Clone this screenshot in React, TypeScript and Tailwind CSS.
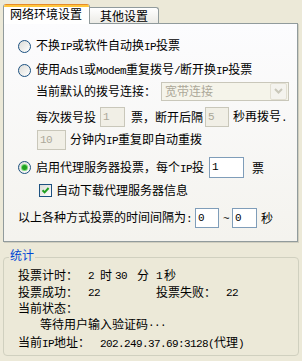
import type { ReactNode } from "react";

// latin runs: narrow mono so each char takes ~6px like the bitmap font
function E({ children }: { children: ReactNode }) {
  return <span className="font-['Liberation_Mono',monospace] text-[11px] tracking-[-0.6px]">{children}</span>;
}

function Radio({ checked }: { checked?: boolean }) {
  return (
    <span className="w-[13px] h-[13px] shrink-0 rounded-full border border-[#1C5180] bg-linear-to-br from-[#DCDCD7] to-white flex items-center justify-center">
      {checked && <span className="w-[5px] h-[5px] rounded-full bg-[#21A121] shadow-[0_0_0_1px_#7BD77B]" />}
    </span>
  );
}

function Checkbox() {
  return (
    <span className="w-[13px] h-[13px] shrink-0 border border-[#1C5180] bg-linear-to-br from-[#DCDCD7] to-white flex items-center justify-center">
      <svg width="9" height="9" viewBox="0 0 9 9">
        <path d="M1.5 4.2 L3.6 6.4 L7.6 2" fill="none" stroke="#21A121" strokeWidth="2" />
      </svg>
    </span>
  );
}

function Field({ value, w, disabled, h = "h-[20px]" }: { value: string; w: string; disabled?: boolean; h?: string }) {
  return (
    <span
      className={`${w} ${h} shrink-0 border flex items-center pl-[2px] ${
        disabled ? "border-[#C9C7BA] bg-[#F1EFE6] text-[#ACA899]" : "border-[#7F9DB9] bg-white text-black"
      }`}
    >
      <E>{value}</E>
    </span>
  );
}

export default function App() {
  return (
    <div className="w-[302px] h-[361px] bg-[#ECE9D8] font-['Noto_Sans_CJK_SC',sans-serif] text-[12px] leading-none text-black flex flex-col">
      {/* tabs */}
      <div className="relative z-10 flex items-end h-[24px] pl-[3px]">
        <div className="w-[87px] h-[20px] bg-white border-x border-[#919B9C] rounded-t-[3px] overflow-hidden flex flex-col">
          <div className="h-[1px] bg-[#E68B2C]" />
          <div className="h-[2px] bg-[#FFC73C]" />
          <div className="pl-[6px] pt-[1px]">网络环境设置</div>
        </div>
        <div className="w-[69px] h-[16px] mb-[1px] border-t border-r border-[#919B9C] rounded-tr-[3px] bg-linear-to-b from-white to-[#ECEBE6] pl-[10px] pt-[2px]">
          其他设置
        </div>
      </div>

      {/* tab page */}
      <div className="-mt-[1px] ml-[3px] w-[295px] h-[219px] border border-[#919B9C] bg-linear-to-b from-[#FCFCFE] to-[#F4F3EE] shadow-[1px_1px_0_#D0CEBF] pl-[14px] pt-[12px] flex flex-col">
        <div className="flex items-center h-[20px]">
          <Radio />
          <span className="ml-[5px]">
            不换<E>IP</E>或软件自动换<E>IP</E>投票
          </span>
        </div>
        <div className="flex items-center h-[20px] mt-[4px]">
          <Radio />
          <span className="ml-[5px]">
            使用<E>Adsl</E>或<E>Modem</E>重复拨号<E>/</E>断开换<E>IP</E>投票
          </span>
        </div>
        <div className="flex items-center h-[20px] mt-[1px] pl-[18px]">
          <span>当前默认的拨号连接：</span>
          <div className="ml-[5px] w-[128px] h-[19px] border border-[#C9C7BA] bg-[#F5F4EA] flex items-center">
            <span className="flex-1 pl-[3px] text-[#ACA899]">宽带连接</span>
            <span className="w-[17px] h-[17px] mr-[1px] border border-[#E2DFD2] bg-[#F4F3EE] rounded-[2px] flex items-center justify-center">
              <svg width="9" height="6" viewBox="0 0 9 6">
                <path d="M1 1 L4.5 4.5 L8 1" fill="none" stroke="#C9C7BA" strokeWidth="2" />
              </svg>
            </span>
          </div>
        </div>
        <div className="flex items-center h-[20px] mt-[6px] pl-[18px]">
          <span>每次拨号投</span>
          <span className="ml-[4px]"><Field value="1" w="w-[25px]" disabled /></span>
          <span className="ml-[6px]">票，断开后隔</span>
          <span className="ml-[2px]"><Field value="5" w="w-[24px]" disabled /></span>
          <span className="ml-[4px]">
            秒再拨号<E>.</E>
          </span>
        </div>
        <div className="flex items-center h-[20px] mt-[3px] pl-[19px]">
          <Field value="10" w="w-[29px]" disabled />
          <span className="ml-[4px]">
            分钟内<E>IP</E>重复即自动重拨
          </span>
        </div>
        <div className="flex items-center h-[21px] mt-[7px]">
          <Radio checked />
          <span className="ml-[5px]">
            启用代理服务器投票，每个<E>IP</E>投
          </span>
          <span className="ml-[5px]"><Field value="1" w="w-[35px]" h="h-[21px]" /></span>
          <span className="ml-[8px]">票</span>
        </div>
        <div className="flex items-center h-[20px] mt-[2px] pl-[21px]">
          <Checkbox />
          <span className="ml-[4px]">自动下载代理服务器信息</span>
        </div>
        <div className="flex items-center h-[20px] mt-[8px]">
          <span>
            以上各种方式投票的时间间隔为<E>:</E>
          </span>
          <span className="ml-[3px]"><Field value="0" w="w-[24px]" /></span>
          <span className="ml-[4px]"><E>~</E></span>
          <span className="ml-[3px]"><Field value="0" w="w-[25px]" /></span>
          <span className="ml-[4px]">秒</span>
        </div>
      </div>

      {/* stats group */}
      <div className="relative mt-[15px] ml-[3px] w-[296px] h-[99px] border border-[#D0D0BF] rounded-[4px] pl-[14px] pt-[8px] flex flex-col">
        <span className="absolute -top-[9px] left-[5px] px-[1px] bg-[#ECE9D8] text-[#0046D5]">统计</span>
        <div className="flex items-center h-[17px]">
          <span className="w-[70px] shrink-0">投票计时：</span>
          <span className="w-[12px] shrink-0"><E>2</E></span>
          <span className="w-[15px] shrink-0">时</span>
          <span className="w-[22px] shrink-0"><E>30</E></span>
          <span className="w-[19px] shrink-0">分</span>
          <span className="w-[8px] shrink-0"><E>1</E></span>
          <span>秒</span>
        </div>
        <div className="flex items-center h-[17px]">
          <span className="w-[70px] shrink-0">投票成功：</span>
          <span className="w-[68px] shrink-0"><E>22</E></span>
          <span className="w-[70px] shrink-0">投票失败：</span>
          <span><E>22</E></span>
        </div>
        <div className="flex items-center h-[15px]">当前状态：</div>
        <div className="flex items-center h-[17px] pl-[22px]">
          等待用户输入验证码<E>...</E>
        </div>
        <div className="flex items-center h-[17px] mt-[2px]">
          <span className="w-[82px] shrink-0">
            当前<E>IP</E>地址：
          </span>
          <span>
            <E>202.249.37.69:3128(</E>代理<E>)</E>
          </span>
        </div>
      </div>
    </div>
  );
}
